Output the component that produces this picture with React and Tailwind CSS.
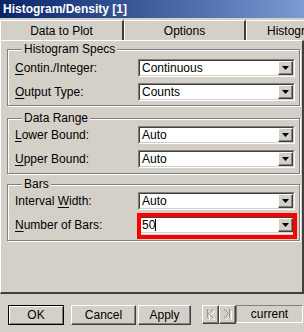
import React from 'react';

const raised = "border border-t-white border-l-white border-b-[#404040] border-r-[#404040] shadow-[inset_-1px_-1px_0_#808080]";

function Accel({ k, rest }) {
  return (
    <span className="whitespace-nowrap">
      <span className="underline underline-offset-[2px]">{k}</span>{rest}
    </span>
  );
}

function Combo({ value, caret, highlight }) {
  return (
    <div className="relative w-[157px] h-[18px] shrink-0">
      <div className="h-full flex border border-t-[#808080] border-l-[#808080] border-b-white border-r-white">
        <div className="flex-1 flex border border-t-[#404040] border-l-[#404040] border-b-[#d4d0c8] border-r-[#d4d0c8] bg-white">
          <div className="flex-1 flex items-center pl-[2px] leading-none">
            {value}
            {caret && <span className="inline-block w-px h-[12px] bg-black" />}
          </div>
          <div className={`w-[15px] bg-[#d4d0c8] flex items-center justify-center ${raised}`}>
            <svg width="7" height="4" viewBox="0 0 7 4"><path d="M0 0h7L3.5 4z" fill="#000" /></svg>
          </div>
        </div>
      </div>
      {highlight && (
        <div className="absolute -left-[1px] -top-[3px] -right-[2px] -bottom-[5px] border-[4px] border-[#ff0000]" />
      )}
    </div>
  );
}

function Row({ label, children }) {
  return (
    <div className="flex items-center justify-between h-[18px]">
      {label}
      {children}
    </div>
  );
}

function Group({ title, className, children }) {
  return (
    <fieldset className={`border border-[#808080] shadow-[inset_1px_1px_0_#fff,1px_1px_0_#fff] pl-[7px] pr-[4px] ${className}`}>
      <legend className="ml-[7px] px-[2px] bg-[#d4d0c8] leading-[14px]">{title}</legend>
      {children}
    </fieldset>
  );
}

function Tab({ label, className }) {
  return (
    <div className={`h-[20px] w-[122px] shrink-0 flex items-center border-t border-l border-t-white border-l-white border-r-2 border-r-[#404040] ${className}`}>
      {label}
    </div>
  );
}

export default function App() {
  return (
    <div className="w-[304px] h-[332px] bg-[#d4d0c8] flex flex-col overflow-hidden text-[12px] text-black font-['Liberation_Sans',Arial,sans-serif]">
      {/* title bar */}
      <div className="h-[18px] shrink-0 bg-gradient-to-r from-[#0a246a] to-[#7b9bd3] text-white font-bold text-[12px] leading-[18px] pl-[3px]">
        Histogram/Density [1]
      </div>

      {/* tabs */}
      <div className="h-[22px] shrink-0 pt-[2px] flex overflow-hidden">
        <Tab label="Data to Plot" className="w-[124px] justify-center" />
        <Tab label="Options" className="justify-center" />
        <Tab label="Histogram" className="border-r-0 pl-[20px] whitespace-nowrap" />
      </div>

      {/* panel */}
      <div className="h-[254px] shrink-0 border-t border-l border-t-white border-l-white border-r-2 border-b-2 border-r-[#404040] border-b-[#404040] pl-[6px] pr-[2px] pt-[1px]">
        <Group title="Histogram Specs" className="pt-[3px] pb-[4px]">
          <div className="flex flex-col gap-[6px]">
            <Row label={<Accel k="C" rest="ontin./Integer:" />}><Combo value="Continuous" /></Row>
            <Row label={<Accel k="O" rest="utput Type:" />}><Combo value="Counts" /></Row>
          </div>
        </Group>

        <Group title="Data Range" className="mt-[5px] pt-[1px] pb-[5px]">
          <div className="flex flex-col gap-[6px]">
            <Row label={<Accel k="L" rest="ower Bound:" />}><Combo value="Auto" /></Row>
            <Row label={<Accel k="U" rest="pper Bound:" />}><Combo value="Auto" /></Row>
          </div>
        </Group>

        <Group title="Bars" className="mt-[3px] pt-[1px] pb-[6px]">
          <div className="flex flex-col gap-[6px]">
            <Row label={<span className="whitespace-nowrap">Interval <Accel k="W" rest="idth:" /></span>}><Combo value="Auto" /></Row>
            <Row label={<Accel k="N" rest="umber of Bars:" />}><Combo value="50" caret highlight /></Row>
          </div>
        </Group>
      </div>

      {/* bottom buttons */}
      <div className="flex items-start pt-[11px] pl-[8px]">
        <div className="w-[56px] h-[20px] flex items-center justify-center border border-black shadow-[inset_1px_1px_0_#fff,inset_-1px_-1px_0_#808080]">OK</div>
        <div className={`ml-[7px] w-[65px] h-[20px] flex items-center justify-center ${raised}`}>Cancel</div>
        <div className={`ml-[2px] w-[53px] h-[20px] flex items-center justify-center ${raised}`}>Apply</div>
        <div className="ml-[11px] flex">
          <div className={`w-[17px] h-[19px] flex items-center justify-center ${raised}`}>
            <svg width="9" height="11" viewBox="0 0 9 11">
              <path d="M2.5 1v9M8 1L3.5 5.5 8 10" stroke="#fff" fill="none" transform="translate(1 1)" />
              <path d="M1.5 0v9M7 0L2.5 4.5 7 9" stroke="#9a968e" fill="none" />
            </svg>
          </div>
          <div className={`w-[17px] h-[19px] flex items-center justify-center ${raised}`}>
            <svg width="9" height="11" viewBox="0 0 9 11">
              <path d="M7.5 1v9M2 1l4.5 4.5L2 10" stroke="#fff" fill="none" transform="translate(1 1)" />
              <path d="M6.5 0v9M1 0l4.5 4.5L1 9" stroke="#9a968e" fill="none" />
            </svg>
          </div>
        </div>
        <div className="w-[67px] h-[18px] flex items-center justify-center border border-t-[#808080] border-l-[#808080] border-b-white border-r-white">
          current
        </div>
      </div>
    </div>
  );
}
